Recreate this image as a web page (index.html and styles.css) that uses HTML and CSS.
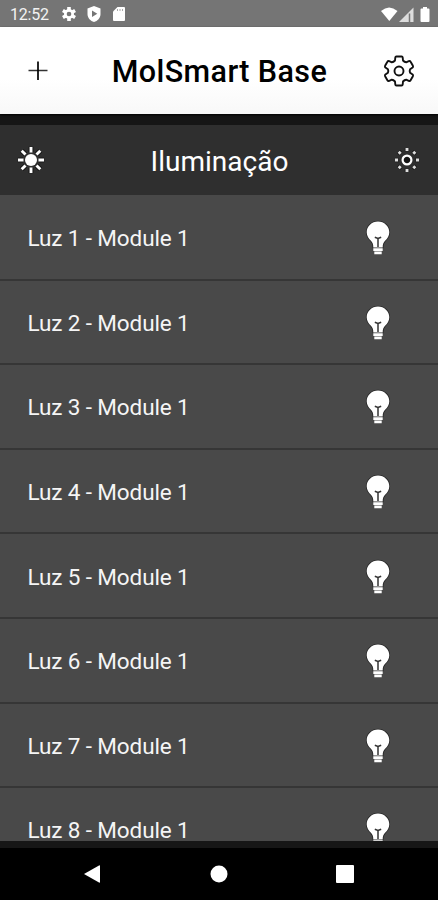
FILE: index.html
```html
<!DOCTYPE html>
<html lang="pt-BR">
<head>
    <meta charset="UTF-8">
    <meta name="viewport" content="width=device-width, initial-scale=1.0">
    <title>MolSmart Base</title>
    <link rel="stylesheet" href="styles.css">
</head>
<body>
    <svg class="symbols" width="0" height="0">
        <symbol id="bulb" viewBox="0 0 26 36">
            <path d="M13 1.500C6.800 1.500 1.700 6.300 1.700 12.300C1.700 16 3.700 18.600 5.700 20.500C7.700 22.500 8.300 24 8.300 27.500H17.700C17.700 24 18.300 22.500 20.300 20.500C22.300 18.600 24.300 16 24.300 12.300C24.300 6.300 19.200 1.500 13 1.500Z" fill="#fff" stroke="#292929" stroke-width="1.600" paint-order="stroke"/>
            <path d="M8.300 28.200H17.700V31H8.300ZM9.300 31.600H16.700V34.200H9.300Z" fill="#fff"/>
            <path d="M9.800 17.300L13 18.500L16.200 17.300M13 18.500V27" fill="none" stroke="#333" stroke-width="1.500"/>
        </symbol>
    </svg>
    <div class="screen">
        <div class="status-bar">
            <span class="clock">12:52</span>
            <svg class="status-icon" width="16" height="16" viewBox="-8 -8 16 16">
                <g stroke="#fff" stroke-width="3.600">
                    <path d="M0-7V7M-6.100-3.500L6.100 3.500M-6.100 3.500L6.100-3.500"/>
                </g>
                <circle r="5" fill="#fff"/>
                <circle r="2.300" fill="#757575"/>
            </svg>
            <svg class="status-icon" width="16" height="16" viewBox="0 0 16 16">
                <path d="M8 0L14.500 2.500V8C14.500 12 11.500 15 8 16C4.500 15 1.500 12 1.500 8V2.500Z" fill="#fff"/>
                <path d="M6 4.500V11L11.300 7.800Z" fill="#757575"/>
            </svg>
            <svg class="status-icon" width="16" height="16" viewBox="0 0 16 16">
                <path d="M6.500 1H13Q14 1 14 2V14Q14 15 13 15H3Q2 15 2 14V5.500Z" fill="#fff"/>
                <path d="M6.500 3V5M9 3V5M11.500 3V5" stroke="#aaa" stroke-width="1"/>
            </svg>
            <svg class="signal" width="52" height="18" viewBox="0 0 52 18">
                <path d="M0 6Q8-1 16.500 6L8.300 16Z" fill="#fff"/>
                <path d="M18 17L32.500 2.500V17Z" fill="#ddd"/>
                <path d="M28.500 8.500V17" stroke="#777" stroke-width="1.500"/>
                <path d="M39.500 4.500Q39.500 3.500 40.500 3.500H42V2H46V3.500H47.500Q48.500 3.500 48.500 4.500V16Q48.500 17 47.500 17H40.500Q39.500 17 39.500 16Z" fill="#fff"/>
            </svg>
        </div>
        <header class="header">
            <svg width="20" height="20" viewBox="0 0 20 20">
                <path d="M.5 9.500H19.500" stroke="#333" stroke-width="1.500"/>
                <path d="M10 .5V19" stroke="#000" stroke-width="1.700"/>
            </svg>
            <h1 class="title">MolSmart Base</h1>
            <svg width="32" height="32" viewBox="-16 -16 32 32" fill="none" stroke="#111" stroke-width="1.900" stroke-linejoin="round">
                <path d="M-2.600-14.500H2.600Q3.600-14.500 3.700-13.500L4-10.500Q5.500-8.800 7.100-8.700L9.800-9.900Q11-10.300 11.600-9.200L13.900-5.200Q14.400-4.200 13.600-3.500L11.100-1.800Q10.300 0 11.100 1.800L13.600 3.500Q14.400 4.200 13.900 5.200L11.600 9.200Q11 10.300 9.800 9.900L7.100 8.700Q5.500 8.800 4 10.500L3.700 13.500Q3.600 14.500 2.600 14.500H-2.600Q-3.600 14.500-3.700 13.500L-4 10.500Q-5.500 8.800-7.100 8.700L-9.800 9.900Q-11 10.300-11.600 9.200L-13.900 5.200Q-14.400 4.200-13.600 3.500L-11.100 1.800Q-10.300 0-11.100-1.800L-13.600-3.500Q-14.400-4.200-13.900-5.200L-11.600-9.200Q-11-10.300-9.800-9.900L-7.100-8.700Q-5.500-8.800-4-10.500L-3.700-13.500Q-3.600-14.500-2.600-14.500Z"/>
                <circle r="4.500"/>
            </svg>
        </header>
        <div class="section-header">
            <svg width="30" height="30" viewBox="-15 -15 30 30">
                <g stroke="#181818" stroke-width="5">
                    <path d="M0-13.200V-8M0 8V13.200M-13.200 0H-8M8 0H13.200M-9.300-9.300L-5.700-5.700M5.700 5.700L9.300 9.300M-9.300 9.300L-5.700 5.700M5.700-5.700L9.300-9.300"/>
                </g>
                <circle r="6" fill="#fff"/>
                <path d="M0-13V-7.500M0 7.500V13M-13 0H-7.500M7.500 0H13M-9.300-9.300L-5.500-5.500M5.500 5.500L9.300 9.300M-9.300 9.300L-5.500 5.500M5.500-5.500L9.300-9.300" stroke="#fff" stroke-width="2.900"/>
            </svg>
            <h2 class="section-title">Iluminação</h2>
            <svg width="30" height="30" viewBox="-15 -15 30 30">
                <path d="M0-12V-8.700M0 8.700V12M-12 0H-8.700M8.700 0H12M-8.500-8.500L-6.200-6.200M6.200 6.200L8.500 8.500M-8.500 8.500L-6.200 6.200M6.200-6.200L8.500-8.500" stroke="#181818" stroke-width="4.500"/>
                <circle r="4.400" fill="#151515" stroke="#fff" stroke-width="2.200"/>
                <path d="M0-12V-9M0 9V12M-12 0H-9M9 0H12M-8.300-8.300L-6.300-6.300M6.300 6.300L8.300 8.300M-8.300 8.300L-6.300 6.300M6.300-6.300L8.300-8.300" stroke="#ddd" stroke-width="2.900"/>
            </svg>
        </div>
        <div class="list">
            <div class="row"><span>Luz 1 - Module 1</span><svg class="bulb"><use href="#bulb"/></svg></div>
            <div class="row"><span>Luz 2 - Module 1</span><svg class="bulb"><use href="#bulb"/></svg></div>
            <div class="row"><span>Luz 3 - Module 1</span><svg class="bulb"><use href="#bulb"/></svg></div>
            <div class="row"><span>Luz 4 - Module 1</span><svg class="bulb"><use href="#bulb"/></svg></div>
            <div class="row"><span>Luz 5 - Module 1</span><svg class="bulb"><use href="#bulb"/></svg></div>
            <div class="row"><span>Luz 6 - Module 1</span><svg class="bulb"><use href="#bulb"/></svg></div>
            <div class="row"><span>Luz 7 - Module 1</span><svg class="bulb"><use href="#bulb"/></svg></div>
            <div class="row"><span>Luz 8 - Module 1</span><svg class="bulb"><use href="#bulb"/></svg></div>
        </div>
        <nav class="nav-bar">
            <svg width="18" height="20" viewBox="0 0 18 20"><path d="M1 10L16 1.500Q17 1 17 2V18Q17 19 16 18.500Z" fill="#fff"/></svg>
            <svg width="18" height="18" viewBox="0 0 18 18"><circle cx="9" cy="9" r="8.500" fill="#fff"/></svg>
            <svg width="18" height="18" viewBox="0 0 18 18"><rect width="18" height="18" rx="1" fill="#fff"/></svg>
        </nav>
    </div>
</body>
</html>
```
FILE: styles.css
```css
*{
    margin: 0;
    padding: 0;
    box-sizing: border-box;
}
body{
    background-color: #161616;
    font-family: Roboto, "Liberation Sans", sans-serif;
    overflow: hidden;
}
svg{
    display: block;
    flex-shrink: 0;
}
.symbols{
    position: absolute;
}
.screen{
    height: 900px;
    width: 438px;
    display: flex;
    flex-direction: column;
}
.status-bar{
    height: 27px;
    padding: 1px 5px 0 10px;
    display: flex;
    align-items: center;
    background-color: #757575;
    color: #f2f2f2;
}
.clock{
    width: 51px;
    font-size: 16px;
    letter-spacing: -0.2px;
}
.status-icon{
    margin-right: 9px;
}
.signal{
    margin-left: auto;
}
.header{
    height: 87px;
    padding: 0 23px 0 28px;
    display: flex;
    align-items: center;
    justify-content: space-between;
    background: linear-gradient(#fff 60%, #f8f8f8);
    box-shadow: 0 1px 2px #000;
}
.title{
    font-size: 30.5px;
    font-weight: 500;
    letter-spacing: 0.4px;
    color: #000;
    margin: 2px 0 0 8px;
}
.section-header{
    height: 70px;
    margin-top: 11px;
    padding: 0 16px;
    display: flex;
    align-items: center;
    justify-content: space-between;
    background-color: #2f2f2f;
    color: #fff;
}
.section-title{
    font-size: 28px;
    font-weight: 400;
    margin: 2px 0 0 1px;
}
.list{
    height: 645.5px;
    padding-top: 1px;
    overflow: hidden;
    background-color: #494949;
}
.row{
    height: 84.6px;
    padding: 2px 47px 0 27.5px;
    display: flex;
    align-items: center;
    justify-content: space-between;
    border-bottom: 2px solid #363636;
    color: #f5f5f5;
    font-size: 22.5px;
    letter-spacing: -0.12px;
}
.bulb{
    width: 26px;
    height: 36px;
}
.nav-bar{
    height: 52px;
    margin-top: auto;
    padding: 0 84px 0 83px;
    display: flex;
    align-items: center;
    justify-content: space-between;
    background-color: #000;
}
```
